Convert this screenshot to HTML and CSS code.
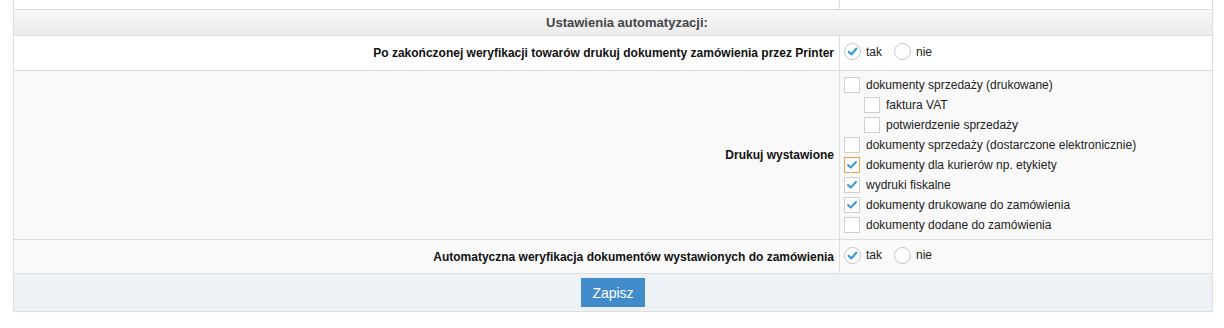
FILE: index.html
```html
<!DOCTYPE html>
<html lang="pl">
<head>
<meta charset="utf-8">
<title>Ustawienia automatyzacji</title>
<link rel="stylesheet" href="styles.css">
</head>
<body>
<div class="panel">
  <div class="row row-top"><div class="cell-l"></div><div class="cell-r"></div></div>
  <div class="row-head">Ustawienia automatyzacji:</div>
  <div class="row row-1">
    <div class="cell-l label">Po zakończonej weryfikacji towarów drukuj dokumenty zamówienia przez Printer</div>
    <div class="cell-r radios">
      <span class="radio checked"><svg viewBox="0 0 16 16"><polyline points="4,8.5 7,11 12,5"/></svg></span><span class="rtext">tak</span>
      <span class="radio"></span><span class="rtext">nie</span>
    </div>
  </div>
  <div class="row row-2">
    <div class="cell-l label">Drukuj wystawione</div>
    <div class="cell-r checks">
      <div class="opt"><span class="box"></span><span>dokumenty sprzedaży (drukowane)</span></div>
      <div class="opt sub"><span class="box"></span><span>faktura VAT</span></div>
      <div class="opt sub"><span class="box"></span><span>potwierdzenie sprzedaży</span></div>
      <div class="opt"><span class="box"></span><span>dokumenty sprzedaży (dostarczone elektronicznie)</span></div>
      <div class="opt"><span class="box checked focus"><svg viewBox="0 0 16 16"><polyline points="3.5,8 6.5,11 12.5,4.5"/></svg></span><span>dokumenty dla kurierów np. etykiety</span></div>
      <div class="opt"><span class="box checked"><svg viewBox="0 0 16 16"><polyline points="3.5,8 6.5,11 12.5,4.5"/></svg></span><span>wydruki fiskalne</span></div>
      <div class="opt"><span class="box checked"><svg viewBox="0 0 16 16"><polyline points="3.5,8 6.5,11 12.5,4.5"/></svg></span><span>dokumenty drukowane do zamówienia</span></div>
      <div class="opt"><span class="box"></span><span>dokumenty dodane do zamówienia</span></div>
    </div>
  </div>
  <div class="row row-3">
    <div class="cell-l label">Automatyczna weryfikacja dokumentów wystawionych do zamówienia</div>
    <div class="cell-r radios">
      <span class="radio checked"><svg viewBox="0 0 16 16"><polyline points="4,8.5 7,11 12,5"/></svg></span><span class="rtext">tak</span>
      <span class="radio"></span><span class="rtext">nie</span>
    </div>
  </div>
  <div class="row-foot"><button class="btn" type="button">Zapisz</button></div>
</div>
</body>
</html>
```
FILE: styles.css
```css
html, body { margin: 0; padding: 0; background: #fff; }
body { font-family: "Liberation Sans", Arial, sans-serif; font-size: 12px; color: #333; }
.panel {
  margin-left: 13px;
  width: 1200px;
  box-sizing: border-box;
  border-left: 1px solid #ddd;
  border-right: 1px solid #ddd;
}
.row {
  display: grid;
  grid-template-columns: 826px 1fr;
  border-bottom: 1px solid #ddd;
}
.cell-l { border-right: 1px solid #ddd; }
.row-top { height: 9px; background: #fff; }
.row-head {
  height: 25px;
  border-bottom: 1px solid #ddd;
  background: linear-gradient(#f8f8f8, #ebebeb);
  display: flex;
  align-items: center;
  justify-content: center;
  padding-left: 28px;
  font-weight: bold;
  font-size: 13px;
  color: #444;
}
.row-1 { height: 34px; background: #fff; }
.row-2 { height: 168px; background: #f9f9f9; }
.row-3 { height: 33px; background: #fafafa; }
.label {
  display: flex;
  align-items: center;
  justify-content: flex-end;
  padding-right: 5px;
  font-weight: bold;
  color: #111;
}
.radios {
  display: flex;
  align-items: center;
  padding-left: 4px;
  padding-bottom: 3px;
}
.radio {
  width: 15px;
  height: 15px;
  border: 1px solid #c4c4c4;
  border-radius: 50%;
  background: #fff;
  display: inline-flex;
  box-sizing: content-box;
}
.radio svg, .box svg { width: 100%; height: 100%; }
.radio polyline, .box polyline {
  fill: none;
  stroke: #3a9ad9;
  stroke-width: 2.4;
  stroke-linecap: round;
  stroke-linejoin: round;
}
.rtext { margin-left: 5px; margin-right: 12px; color: #222; }
.checks {
  padding: 6px 0 0 4px;
  display: flex;
  flex-direction: column;
  gap: 4px;
}
.opt { display: flex; align-items: center; height: 16px; color: #222; }
.opt.sub { padding-left: 20px; }
.box {
  width: 14px;
  height: 14px;
  border: 1px solid #d0d0d0;
  background: #fff;
  margin-right: 6px;
  display: inline-flex;
  flex: none;
}
.box.focus { border-color: #f0a04b; }
.row-foot {
  height: 37px;
  border-bottom: 1px solid #ddd;
  background: #eef1f6;
  display: flex;
  justify-content: center;
  align-items: flex-start;
}
.btn {
  margin-top: 4px;
  width: 64px;
  height: 29px;
  border: none;
  background: #428bca;
  color: #fff;
  font-family: "Liberation Sans", Arial, sans-serif;
  font-size: 14px;
  padding: 0;
}
```
